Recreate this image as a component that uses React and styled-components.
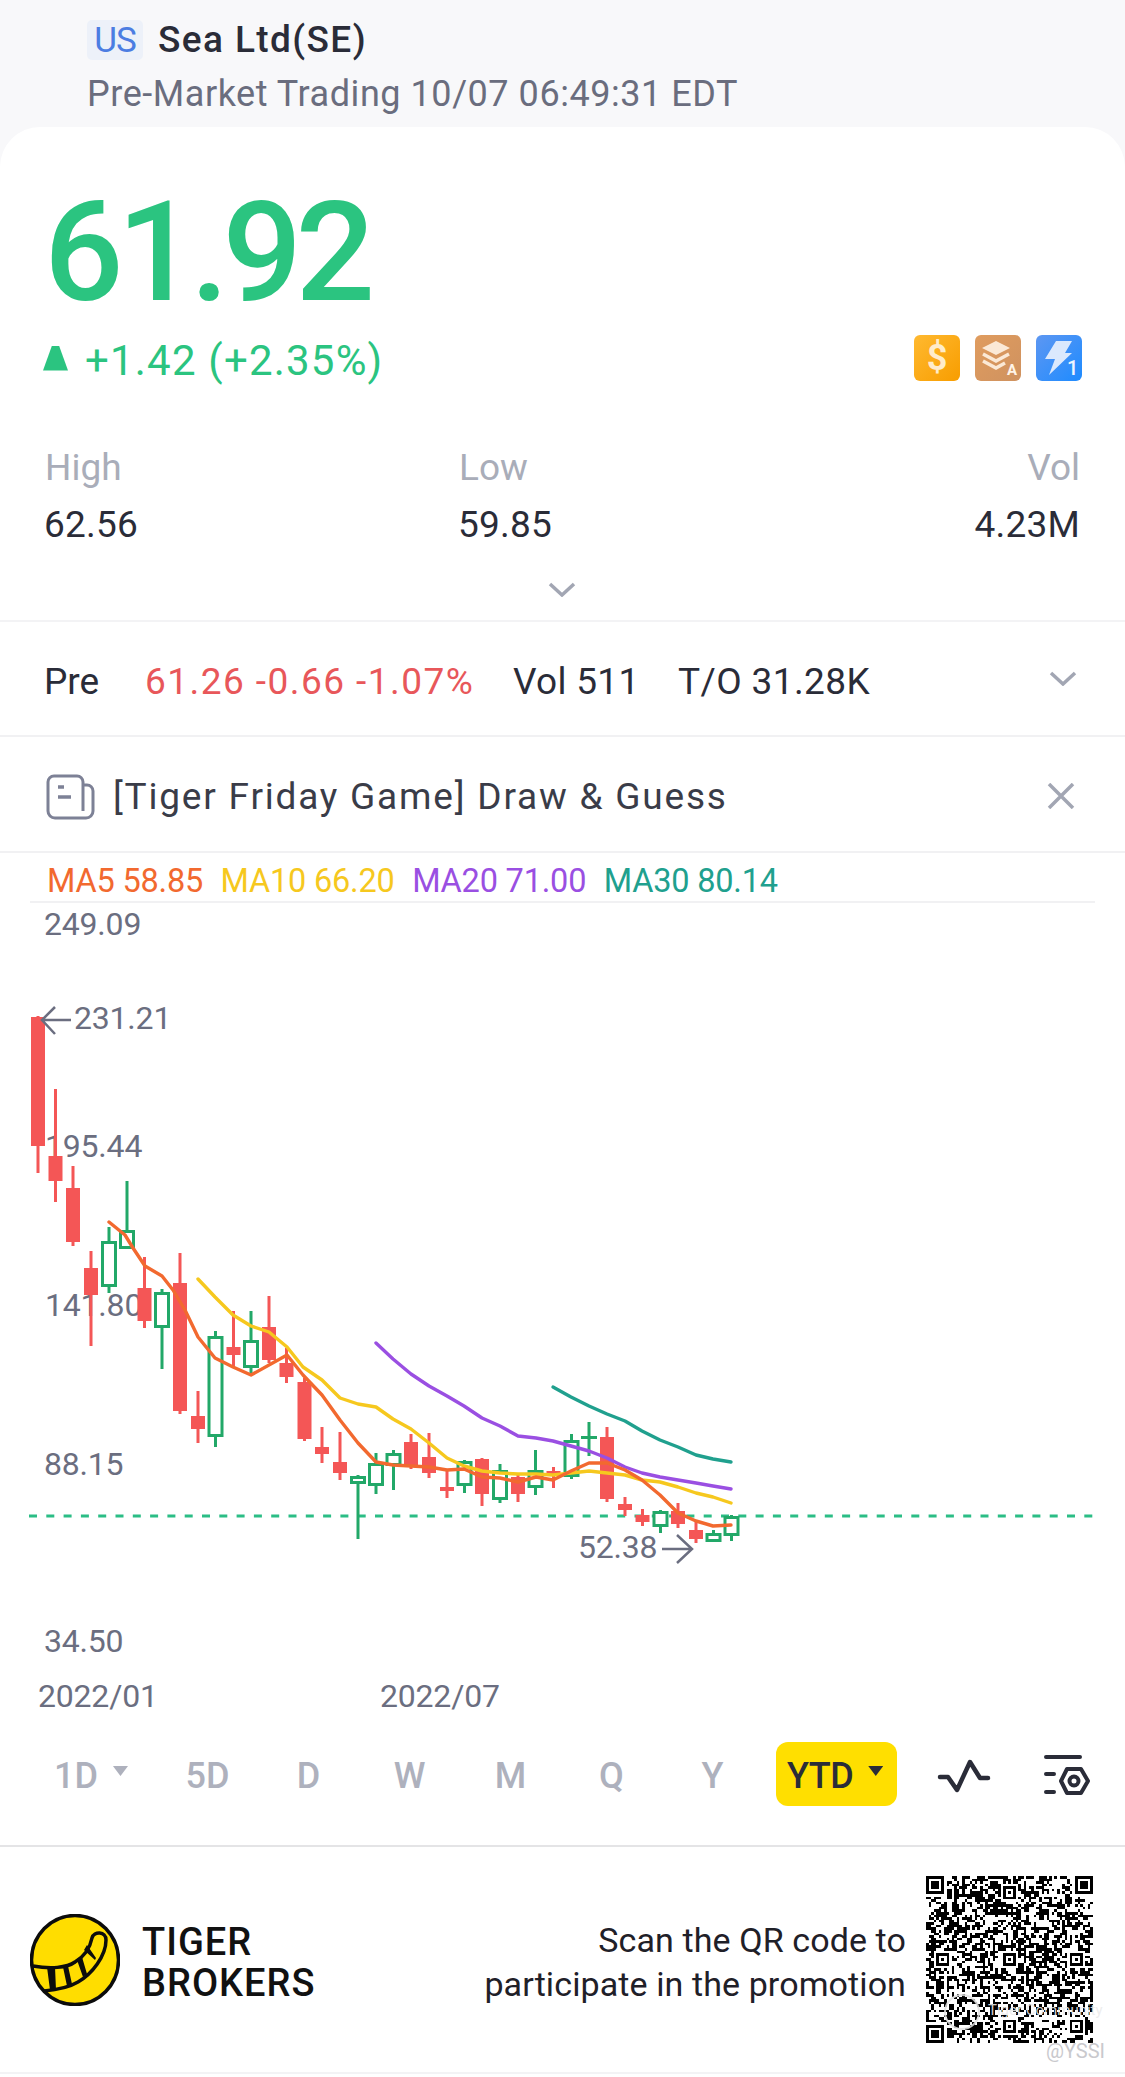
import React, { useMemo } from "react";
import styled, { createGlobalStyle } from "styled-components";

const Global = createGlobalStyle`
  html, body { margin: 0; padding: 0; background: #f8f8fa; }
  body { font-family: Roboto, "Liberation Sans", sans-serif; }
  * { box-sizing: border-box; }
`;

const Page = styled.div`
  width: 1125px;
  height: 2077px;
  background: #f8f8fa;
  overflow: hidden;
  display: flex;
  flex-direction: column;
`;
const Header = styled.header`
  height: 127px;
  padding: 20px 0 0 87px;
  display: flex;
  flex-direction: column;
`;
const NameRow = styled.div`
  display: flex;
  align-items: center;
  gap: 15px;
  height: 40px;
`;
const Market = styled.span`
  width: 56px;
  height: 40px;
  border-radius: 5px;
  background: #edf1f9;
  color: #4c7de2;
  font-size: 35px;
  line-height: 42px;
  text-align: center;
  letter-spacing: -1px;
`;
const Name = styled.h1`
  margin: 0;
  font-size: 37px;
  font-weight: 500;
  line-height: 40px;
  color: #2a2c38;
  letter-spacing: 1.4px;
`;
const Session = styled.div`
  margin-top: 12px;
  font-size: 36px;
  line-height: 44px;
  color: #6a6d7e;
  letter-spacing: 0.55px;
  white-space: nowrap;
`;
const Card = styled.main`
  flex: 1;
  background: #fff;
  border-radius: 40px 40px 0 0;
  display: flex;
  flex-direction: column;
`;
const Quote = styled.section`
  height: 495px;
  padding: 55px 45px 0;
  border-bottom: 2px solid #f3f3f5;
  display: flex;
  flex-direction: column;
`;
const Price = styled.div`
  font-size: 140px;
  line-height: 140px;
  font-weight: 500;
  color: #2bc480;
  letter-spacing: -6.5px;
  margin-left: -1px;
`;
const ChangeRow = styled.div`
  margin-top: 13px;
  height: 46px;
  display: flex;
  align-items: center;
`;
const UpMark = styled.span`
  width: 25px;
  height: 25px;
  margin: 0 17px 0 -2px;
  background: #2bc480;
  clip-path: polygon(36% 0, 64% 0, 100% 100%, 0 100%);
`;
const Change = styled.span`
  padding-top: 6px;
  font-size: 42px;
  line-height: 46px;
  color: #2bc480;
  letter-spacing: 1.2px;
`;
const BadgeRow = styled.div`
  margin-left: auto;
  margin-right: -2px;
  display: flex;
  gap: 15px;
`;
const Stats = styled.div`
  margin-top: 58px;
  display: grid;
  grid-template-columns: 414px 1fr auto;
`;
const Stat = styled.div`
  display: flex;
  flex-direction: column;
  align-items: ${(p) => (p.$end ? "flex-end" : "flex-start")};
`;
const StatLabel = styled.span`
  font-size: 37px;
  line-height: 57px;
  color: #a9adb9;
`;
const StatValue = styled.span`
  font-size: 37px;
  line-height: 58px;
  color: #2a2c38;
  letter-spacing: 0.2px;
  margin-left: -1px;
`;
const Expand = styled.div`
  margin-top: 28px;
  margin-left: -2px;
  display: flex;
  justify-content: center;
  height: 16px;
`;
const InfoRow = styled.div`
  height: ${(p) => p.$h}px;
  padding: 5px 45px 0;
  display: flex;
  align-items: center;
  border-bottom: 2px solid #f1f1f3;
  font-size: 37px;
  color: #2a2c38;
  white-space: nowrap;
`;
const Pre = styled.span`
  width: 101px;
  margin-left: -1px;
`;
const PreChange = styled.span`
  width: 368px;
  color: #e8575a;
  letter-spacing: 1.45px;
`;
const PreVol = styled.span`
  width: 165px;
  letter-spacing: 0.3px;
`;
const PreTurnover = styled.span`
  letter-spacing: 0.4px;
`;
const PushRight = styled.div`
  margin-left: auto;
  margin-right: ${(p) => p.$mr}px;
  margin-top: ${(p) => p.$mt}px;
  display: flex;
  align-items: center;
`;
const GameText = styled.span`
  margin-left: 18px;
  color: #3a3c48;
  letter-spacing: 1.8px;
`;
const MaRow = styled.div`
  height: 50px;
  margin: 0 30px;
  padding: 8px 0 0 17px;
  display: flex;
  align-items: center;
  gap: 17.5px;
  border-bottom: 2px solid #f1f1f3;
  white-space: nowrap;
`;
const Ma = styled.span`
  font-size: 32.5px;
  color: ${(p) => p.$c};
  letter-spacing: -0.2px;
`;
const ChartSvg = styled.svg`
  display: block;
  width: 1125px;
  height: 817px;
`;
const AxisText = styled.text`
  font-family: Roboto, "Liberation Sans", sans-serif;
  font-size: 32px;
  letter-spacing: -0.2px;
  fill: #6b6e80;
`;
const Toolbar = styled.nav`
  height: 127px;
  padding: 22px 0 0 54px;
  display: flex;
  align-items: flex-start;
  border-bottom: 2px solid #e4e4e6;
`;
const Period = styled.span`
  width: ${(p) => (p.$first ? 103 : 101)}px;
  height: 64px;
  padding-top: 4px;
  display: flex;
  align-items: center;
  justify-content: ${(p) => (p.$first ? "flex-start" : "center")};
  font-size: 36px;
  font-weight: 500;
  color: #aeb1bd;
`;
const Caret = styled.i`
  width: 15px;
  height: 10px;
  margin-left: ${(p) => p.$gap}px;
  margin-top: -10px;
  background: ${(p) => p.$c};
  clip-path: polygon(0 0, 100% 0, 50% 100%);
`;
const ActivePeriod = styled.span`
  width: 121px;
  height: 64px;
  margin-left: 13px;
  padding: 4px 0 0 11px;
  border-radius: 12px;
  background: #ffdf00;
  display: flex;
  align-items: center;
  font-size: 36px;
  font-weight: 500;
  color: #2a2c38;
  letter-spacing: -0.5px;
`;
const ToolIcon = styled.svg`
  margin-left: ${(p) => p.$ml}px;
  margin-top: ${(p) => p.$mt}px;
  display: block;
  flex: none;
`;
const Footer = styled.footer`
  height: 227px;
  padding: 0 32px 0 30px;
  display: flex;
  align-items: center;
  border-bottom: 2px solid #f3f3f5;
`;
const Brand = styled.div`
  margin-left: 22px;
  padding-top: 6px;
  font-size: 38px;
  line-height: 41px;
  font-weight: 500;
  color: #111;
  letter-spacing: 1px;
`;
const Promo = styled.div`
  margin-left: auto;
  margin-right: -1px;
  padding-top: 5px;
  text-align: right;
  font-size: 34px;
  line-height: 44px;
  color: #1f2028;
  letter-spacing: 0.1px;
  white-space: nowrap;
`;
const QrBox = styled.div`
  position: relative;
  width: 167px;
  height: 167px;
  margin-left: 21px;
`;
const WmRing = styled.span`
  position: absolute;
  left: 18px;
  top: 118px;
  width: 36px;
  height: 36px;
  border-radius: 50%;
  border: 2px solid rgba(225, 225, 225, 0.85);
`;
const WmText = styled.span`
  position: absolute;
  left: 62px;
  top: 125px;
  font-size: 15px;
  line-height: 18px;
  color: rgba(235, 235, 235, 0.9);
  white-space: nowrap;
`;
const WmUser = styled.span`
  position: absolute;
  left: 120px;
  top: 163px;
  font-size: 20px;
  line-height: 24px;
  color: #c9c9cd;
  white-space: nowrap;
  text-shadow: 0 0 1px #fff;
`;

const C = [
  [38, 1016, 1173, 1017, 1146, "r"], [55.5, 1089, 1202, 1156, 1181, "r"], [73, 1166, 1246, 1188, 1242, "r"],
  [91, 1251, 1346, 1268, 1295, "r"], [109, 1227, 1293, 1241, 1287, "g"], [127, 1181, 1249, 1230, 1249, "g"],
  [144.5, 1257, 1328, 1288, 1321, "r"], [162, 1289, 1369, 1292, 1328, "g"], [180, 1253, 1414, 1283, 1411, "r"],
  [198, 1391, 1443, 1416, 1429, "r"], [215.5, 1331, 1447, 1336, 1437, "g"], [233.5, 1311, 1368, 1347, 1355, "r"],
  [251, 1311, 1375, 1340, 1368, "g"], [269, 1296, 1363, 1327, 1360, "r"], [286.5, 1348, 1383, 1363, 1377, "r"],
  [304.5, 1378, 1441, 1382, 1439, "r"], [322, 1427, 1463, 1447, 1454, "r"], [340, 1432, 1480, 1462, 1473, "r"],
  [358, 1475, 1539, 1476, 1484, "g"], [376, 1453, 1494, 1463, 1486, "g"], [393.5, 1450, 1490, 1453, 1466, "g"],
  [411, 1434, 1469, 1442, 1467, "r"], [429, 1433, 1478, 1457, 1473, "r"], [447, 1470, 1498, 1487, 1491, "r"],
  [464.5, 1460, 1493, 1461, 1486, "g"], [482, 1458, 1506, 1459, 1494, "r"], [500, 1464, 1503, 1470, 1500, "g"],
  [518, 1475, 1502, 1477, 1494, "r"], [535.5, 1450, 1495, 1470, 1488, "g"], [553.5, 1467, 1488, 1471, 1474, "r"],
  [571.5, 1434, 1479, 1440, 1477, "g"], [589, 1422, 1456, 1436, 1439, "f"], [607, 1427, 1502, 1437, 1499, "r"],
  [625, 1497, 1516, 1504, 1510, "r"], [642.5, 1509, 1526, 1515, 1522, "r"], [660.5, 1510, 1533, 1511, 1527, "g"],
  [678, 1503, 1528, 1511, 1524, "r"], [696, 1522, 1543, 1530, 1539, "r"], [713.5, 1530, 1542, 1533, 1542, "g"],
  [731.5, 1515, 1541, 1516, 1536, "g"],
];

const MA5 = "109,1222 125,1235 133,1248 145,1266 162,1276 173,1290 185,1310 198,1337 215,1358 233,1367 251,1375 287,1355 303,1375 322,1395 340,1420 358,1443 376,1462 393,1465 411,1466 429,1467 447,1470 464,1469 482,1477 500,1478 518,1482 536,1477 553,1480 571,1471 589,1463 607,1463 625,1470 642,1480 660,1495 678,1513 696,1521 713,1526 731,1525";
const MA10 = "198,1279 215,1297 233,1315 251,1326 269,1332 287,1347 303,1367 322,1380 340,1398 358,1404 376,1407 393,1419 411,1429 429,1443 447,1458 464,1466 482,1471 500,1473 518,1474 536,1474 553,1475 571,1473 589,1471 607,1473 625,1475 642,1480 660,1482 678,1487 696,1493 713,1497 731,1503";
const MA20 = "376,1343 393,1359 411,1374 429,1386 447,1396 464,1406 482,1418 500,1426 518,1436 536,1438 553,1441 571,1446 589,1451 607,1458 625,1467 642,1473 660,1477 678,1480 696,1483 713,1486 731,1489";
const MA30 = "553,1387 571,1397 589,1406 607,1414 625,1421 642,1431 660,1440 678,1447 696,1455 713,1459 731,1462";

function Candle({ d }) {
  const [x, wt, wb, bt, bb, t] = d;
  if (t === "r") {
    return (
      <g fill="#f45656">
        <rect x={x - 1.5} y={wt} width={3} height={wb - wt} />
        <rect x={x - 7} y={bt} width={14} height={bb - bt} />
      </g>
    );
  }
  if (t === "f") {
    return (
      <g fill="#22a868">
        <rect x={x - 1.5} y={wt} width={3} height={wb - wt} />
        <rect x={x - 8} y={bt} width={16} height={bb - bt} />
      </g>
    );
  }
  return (
    <g>
      <rect x={x - 1.5} y={wt} width={3} height={bt - wt} fill="#22a868" />
      <rect x={x - 1.5} y={bb} width={3} height={Math.max(0, wb - bb)} fill="#22a868" />
      <rect x={x - 6.5} y={bt + 1.5} width={13} height={bb - bt - 3} fill="#fff" stroke="#22a868" strokeWidth={3} />
    </g>
  );
}

function Chart() {
  return (
    <ChartSvg viewBox="0 903 1125 817">
      <AxisText x="44" y="935">249.09</AxisText>
      <AxisText x="74" y="1029">231.21</AxisText>
      <AxisText x="45" y="1157">195.44</AxisText>
      <AxisText x="45" y="1316">141.80</AxisText>
      <AxisText x="44" y="1475">88.15</AxisText>
      <AxisText x="44" y="1652">34.50</AxisText>
      <AxisText x="578" y="1558">52.38</AxisText>
      <AxisText x="38" y="1707">2022/01</AxisText>
      <AxisText x="380" y="1707">2022/07</AxisText>
      <line x1="29" x2="1095" y1="1516" y2="1516" stroke="#2bbd85" strokeWidth="3" strokeDasharray="8 9.3" />
      {C.map((d) => <Candle key={d[0]} d={d} />)}
      <g fill="none" strokeWidth="3.4" strokeLinejoin="round" strokeLinecap="round">
        <polyline points={MA30} stroke="#20a08e" />
        <polyline points={MA20} stroke="#9a4fe2" />
        <polyline points={MA10} stroke="#f6c81e" />
        <polyline points={MA5} stroke="#f2692f" />
      </g>
      <path d="M71 1020H42M55 1007L42 1020L55 1034" fill="none" stroke="#6b6e80" strokeWidth="2.5" />
      <path d="M662 1549H692M677 1535L692 1549L677 1563" fill="none" stroke="#6b6e80" strokeWidth="2.5" />
    </ChartSvg>
  );
}

function Chevron({ w = 28, h = 15, c = "#a2a6b3" }) {
  return (
    <svg width={w} height={h} viewBox="0 0 28 15" fill="none">
      <path d="M2 2L14 13L26 2" stroke={c} strokeWidth="3.5" />
    </svg>
  );
}

function Badges() {
  return (
    <BadgeRow>
      <svg width="46" height="46" viewBox="0 0 46 46">
        <defs>
          <linearGradient id="b1" x1="0" y1="0" x2="1" y2="1"><stop offset="0" stopColor="#ffb930" /><stop offset="1" stopColor="#f89d00" /></linearGradient>
          <linearGradient id="b2" x1="0" y1="0" x2="1" y2="1"><stop offset="0" stopColor="#e09c5e" /><stop offset="1" stopColor="#cf9260" /></linearGradient>
          <linearGradient id="b3" x1="0" y1="0" x2="1" y2="1"><stop offset="0" stopColor="#5d97f2" /><stop offset="1" stopColor="#1e8bff" /></linearGradient>
        </defs>
        <rect width="46" height="46" rx="6" fill="url(#b1)" />
        <text x="23" y="35" textAnchor="middle" fontFamily="Roboto" fontSize="36" fontWeight="700" fill="#ffeccb">$</text>
      </svg>
      <svg width="46" height="46" viewBox="0 0 46 46">
        <rect width="46" height="46" rx="6" fill="url(#b2)" />
        <path d="M21 6L35 13L21 20L7 13Z" fill="#fbe9d6" />
        <path d="M8 19L21 26L34 19M8 26L21 33L30 28" fill="none" stroke="#fbe9d6" strokeWidth="3.5" />
        <text x="32" y="40" fontFamily="Roboto" fontSize="15" fontWeight="700" fill="#fff4e8">A</text>
      </svg>
      <svg width="46" height="46" viewBox="0 0 46 46">
        <rect width="46" height="46" rx="6" fill="url(#b3)" />
        <path d="M20 6H36L29 18H36L13 40L19 24H9Z" fill="#dbe9fd" />
        <text x="31" y="40" fontFamily="Roboto" fontSize="20" fontWeight="500" fill="#eef5ff">1</text>
      </svg>
    </BadgeRow>
  );
}

function DocIcon() {
  return (
    <svg width="50" height="46" viewBox="0 0 50 46" fill="none" stroke="#7d8196" strokeWidth="3">
      <path d="M38 37V8a6 6 0 0 0-6-6H9a6 6 0 0 0-6 6V37a7 7 0 0 0 7 7H41a7 7 0 0 0 7-7V17a6 6 0 0 0-6-6H38" />
      <path d="M13 13H19M13 23H26" strokeWidth="3.5" />
    </svg>
  );
}

function Logo() {
  return (
    <svg width="90" height="92" viewBox="0 0 90 92">
      <ellipse cx="45" cy="46" rx="43.5" ry="44.5" fill="#ffdd00" stroke="#0c0c0c" strokeWidth="3.5" />
      <path d="M3 52C20 55 37 54 45 48C55 42 60 34 62 24C64 17 76 17 76 26C76 42 62 60 48 68C38 74 25 76 14 77" fill="none" stroke="#0c0c0c" strokeWidth="3.5" />
      <path d="M17 53L25 53L26 76L20 76ZM33 53L38 52L42 70L37 72ZM47 46L52 43L57 60L53 63ZM54 36L57 31L66 44L65 46Z" fill="#0c0c0c" />
    </svg>
  );
}

function Qr() {
  const path = useMemo(() => {
    const n = 65;
    const g = [];
    let s = 20221007;
    const rnd = () => {
      s = (Math.imul(s, 1664525) + 1013904223) >>> 0;
      return (s >>> 16) / 65536;
    };
    for (let y = 0; y < n; y++) {
      g.push([]);
      for (let x = 0; x < n; x++) {
        const prevL = x > 0 ? g[y][x - 1] : 0;
        const prevT = y > 0 ? g[y - 1][x] : 0;
        g[y].push(rnd() < 0.4 + 0.1 * prevL + 0.1 * prevT ? 1 : 0);
      }
    }
    const stamp = (ox, oy, size) => {
      for (let y = -1; y <= size; y++) {
        for (let x = -1; x <= size; x++) {
          const X = ox + x;
          const Y = oy + y;
          if (X < 0 || Y < 0 || X >= n || Y >= n) continue;
          const d = Math.min(x, y, size - 1 - x, size - 1 - y);
          g[Y][X] = d === 0 || d >= 2 ? 1 : 0;
          if (d < 0) g[Y][X] = 0;
        }
      }
    };
    stamp(0, 0, 7);
    stamp(n - 7, 0, 7);
    stamp(0, n - 7, 7);
    for (const ay of [6, 32, 58]) {
      for (const ax of [6, 32, 58]) {
        if ((ay === 6 && ax === 6) || (ay === 6 && ax === 58) || (ay === 58 && ax === 6)) continue;
        stamp(ax - 2, ay - 2, 5);
      }
    }
    let d = "";
    g.forEach((row, y) => row.forEach((v, x) => { if (v) d += `M${x} ${y}h1v1h-1z`; }));
    return d;
  }, []);
  return (
    <svg width="167" height="167" viewBox="0 0 65 65" shapeRendering="crispEdges">
      <path d={path} fill="#000" />
    </svg>
  );
}

export default function App() {
  return (
    <Page>
      <Global />
      <Header>
        <NameRow>
          <Market>US</Market>
          <Name>Sea Ltd(SE)</Name>
        </NameRow>
        <Session>Pre-Market Trading 10/07 06:49:31 EDT</Session>
      </Header>
      <Card>
        <Quote>
          <Price>61.92</Price>
          <ChangeRow>
            <UpMark />
            <Change>+1.42 (+2.35%)</Change>
            <Badges />
          </ChangeRow>
          <Stats>
            <Stat><StatLabel>High</StatLabel><StatValue>62.56</StatValue></Stat>
            <Stat><StatLabel>Low</StatLabel><StatValue>59.85</StatValue></Stat>
            <Stat $end><StatLabel>Vol</StatLabel><StatValue>4.23M</StatValue></Stat>
          </Stats>
          <Expand><Chevron /></Expand>
        </Quote>
        <InfoRow $h={115}>
          <Pre>Pre</Pre>
          <PreChange>61.26 -0.66 -1.07%</PreChange>
          <PreVol>Vol 511</PreVol>
          <PreTurnover>T/O 31.28K</PreTurnover>
          <PushRight $mr={3} $mt={-5}><Chevron /></PushRight>
        </InfoRow>
        <InfoRow $h={116}>
          <DocIcon />
          <GameText>[Tiger Friday Game] Draw &amp; Guess</GameText>
          <PushRight $mr={5} $mt={-2}>
            <svg width="28" height="26" viewBox="0 0 28 26" fill="none" stroke="#a2a6b3" strokeWidth="3.5">
              <path d="M2 1L26 25M26 1L2 25" />
            </svg>
          </PushRight>
        </InfoRow>
        <MaRow>
          <Ma $c="#f2692f">MA5 58.85</Ma>
          <Ma $c="#f6c81e">MA10 66.20</Ma>
          <Ma $c="#9a4fe2">MA20 71.00</Ma>
          <Ma $c="#20a08e">MA30 80.14</Ma>
        </MaRow>
        <Chart />
        <Toolbar>
          <Period $first>1D<Caret $gap={15} $c="#aeb1bd" /></Period>
          <Period>5D</Period>
          <Period>D</Period>
          <Period>W</Period>
          <Period>M</Period>
          <Period>Q</Period>
          <Period>Y</Period>
          <ActivePeriod>YTD<Caret $gap={15} $c="#2a2c38" /></ActivePeriod>
          <ToolIcon $ml={40} $mt={17} width="54" height="36" viewBox="0 0 54 36" fill="none" stroke="#2a2c38" strokeWidth="4.5" strokeLinecap="round" strokeLinejoin="round">
            <path d="M3 18H11L20 31L33 3L43 19H51" />
          </ToolIcon>
          <ToolIcon $ml={52} $mt={11} width="48" height="44" viewBox="0 0 48 44" fill="none" stroke="#2a2c38" strokeWidth="4" strokeLinecap="round" strokeLinejoin="round">
            <path d="M3 4H37M3 21H11M3 39H11" />
            <path d="M18 28L24 16H38L45 28L38 40H24Z" />
            <circle cx="31" cy="28" r="4.5" />
          </ToolIcon>
        </Toolbar>
        <Footer>
          <Logo />
          <Brand>TIGER<br />BROKERS</Brand>
          <Promo>Scan the QR code to<br />participate in the promotion</Promo>
          <QrBox>
            <Qr />
            <WmRing />
            <WmText>Tiger Community</WmText>
            <WmUser>@YSSI</WmUser>
          </QrBox>
        </Footer>
      </Card>
    </Page>
  );
}
